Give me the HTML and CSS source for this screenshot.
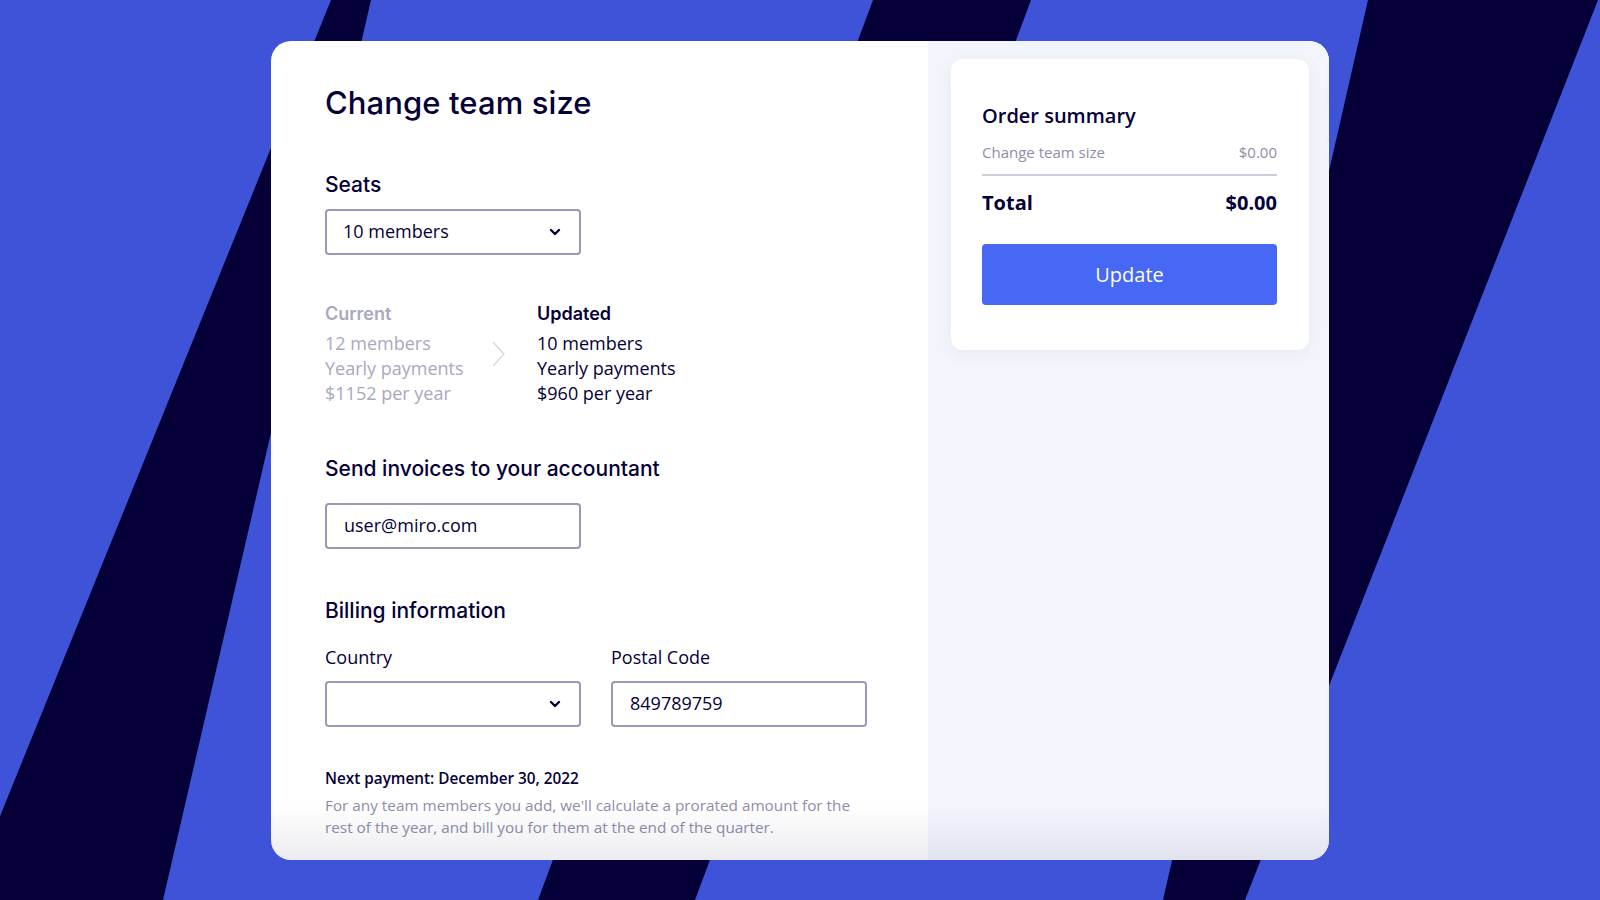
FILE: index.html
```html
<!DOCTYPE html>
<html lang="en">
<head>
<meta charset="utf-8">
<title>Change team size</title>
<link rel="stylesheet" href="styles.css">
</head>
<body>
<svg class="backdrop" viewBox="0 0 1600 900" preserveAspectRatio="none" aria-hidden="true">
  <polygon points="331,0 371,0 163,900 -34,900" />
  <polygon points="873,0 1031,0 695,900 538,900" />
  <polygon points="1368,0 1598,0 1245,900 1163,900" />
</svg>
<main class="card">
  <section class="form">
    <h1 class="title">Change team size</h1>

    <h2 class="heading heading-seats">Seats</h2>
    <div class="control select">
      <span class="control-text">10 members</span>
      <svg class="chev" viewBox="0 0 12 8" aria-hidden="true"><path d="M2 2l4 4 4-4"/></svg>
    </div>

    <div class="compare">
      <div class="col col-current">
        <div class="col-title">Current</div>
        <div class="col-lines">
          <div>12 members</div>
          <div>Yearly payments</div>
          <div>$1152 per year</div>
        </div>
      </div>
      <div class="compare-arrow">
        <svg viewBox="0 0 13 26" aria-hidden="true"><path d="M1 1l11 12L1 25"/></svg>
      </div>
      <div class="col col-updated">
        <div class="col-title">Updated</div>
        <div class="col-lines">
          <div>10 members</div>
          <div>Yearly payments</div>
          <div>$960 per year</div>
        </div>
      </div>
    </div>

    <h2 class="heading heading-invoices">Send invoices to your accountant</h2>
    <div class="control input input-email">
      <span class="control-text">user@miro.com</span>
    </div>

    <h2 class="heading heading-billing">Billing information</h2>
    <div class="billing-row">
      <div class="field">
        <label class="field-label">Country</label>
        <div class="control select">
          <span class="control-text"></span>
          <svg class="chev" viewBox="0 0 12 8" aria-hidden="true"><path d="M2 2l4 4 4-4"/></svg>
        </div>
      </div>
      <div class="field">
        <label class="field-label">Postal Code</label>
        <div class="control input">
          <span class="control-text">849789759</span>
        </div>
      </div>
    </div>

    <p class="next-payment">Next payment: December 30, 2022</p>
    <p class="note">For any team members you add, we'll calculate a prorated amount for the rest of the year, and bill you for them at the end of the quarter.</p>
  </section>

  <aside class="side">
    <div class="summary">
      <h3 class="summary-title">Order summary</h3>
      <div class="summary-row">
        <span>Change team size</span>
        <span>$0.00</span>
      </div>
      <div class="summary-total">
        <span>Total</span>
        <span>$0.00</span>
      </div>
      <button class="update-btn" type="button">Update</button>
    </div>
  </aside>
</main>
</body>
</html>
```

FILE: styles.css
```css
* {
  box-sizing: border-box;
}

html,
body {
  margin: 0;
  padding: 0;
  width: 1600px;
  height: 900px;
  overflow: hidden;
}

body {
  position: relative;
  background: #3f53d8;
  font-family: "Open Sans", "Noto Sans", sans-serif;
  color: #050038;
  display: flex;
  align-items: center;
  justify-content: center;
}

.backdrop {
  position: absolute;
  inset: 0;
  width: 1600px;
  height: 900px;
  z-index: 0;
}

.backdrop polygon {
  fill: #050038;
}

.card {
  position: relative;
  z-index: 1;
  width: 1058px;
  height: 819px;
  background: #ffffff;
  border-radius: 20px;
  overflow: hidden;
  display: grid;
  grid-template-columns: 657px 1fr;
}

.card::after {
  content: "";
  position: absolute;
  left: 0;
  right: 0;
  bottom: 0;
  height: 56px;
  background: linear-gradient(to bottom, rgba(5, 0, 56, 0), rgba(5, 0, 56, 0.075));
  pointer-events: none;
}

/* ---------- Left form ---------- */

.form {
  padding: 43px 54px 0 54px;
  display: flex;
  flex-direction: column;
  align-items: flex-start;
}

.title {
  margin: 0;
  font-family: Inter, "Open Sans", sans-serif;
  font-weight: 500;
  font-size: 31px;
  line-height: 38px;
  letter-spacing: 0.1px;
  color: #050038;
}

.heading {
  margin: 0;
  font-family: Inter, "Open Sans", sans-serif;
  font-weight: 500;
  font-size: 21px;
  line-height: 25px;
  color: #050038;
}

.heading-seats {
  margin-top: 50px;
}

.heading-invoices {
  margin-top: 50px;
}

.heading-billing {
  margin-top: 49px;
}

.control {
  width: 256px;
  height: 46px;
  border: 2px solid #9a98b4;
  border-radius: 4px;
  display: flex;
  align-items: center;
  justify-content: space-between;
  padding: 0 18px 0 16px;
  font-size: 18px;
  line-height: 25px;
  color: #050038;
  background: #fff;
}

.heading-seats + .select {
  margin-top: 12px;
}

.input-email {
  margin-top: 22px;
}

.input .control-text {
  padding-left: 1px;
}

.chev {
  width: 12px;
  height: 8px;
  flex: none;
}

.chev path {
  fill: none;
  stroke: #050038;
  stroke-width: 2.4;
  stroke-linecap: round;
  stroke-linejoin: round;
}

/* compare block */

.compare {
  margin-top: 48px;
  display: flex;
  align-items: center;
}

.col-current {
  width: 162px;
}

.compare-arrow {
  width: 50px;
  padding-left: 5px;
  display: flex;
  align-items: center;
}

.compare-arrow svg {
  width: 13px;
  height: 26px;
}

.compare-arrow path {
  fill: none;
  stroke: #d5d5df;
  stroke-width: 1.3;
}

.col-title {
  font-family: Inter, "Open Sans", sans-serif;
  font-weight: 600;
  font-size: 18px;
  line-height: 22px;
}

.col-lines {
  margin-top: 6px;
  font-size: 18px;
  line-height: 25px;
}

.col-current .col-title,
.col-current .col-lines {
  color: #a9a8bf;
}

.col-updated .col-title,
.col-updated .col-lines {
  color: #050038;
}

/* billing */

.billing-row {
  margin-top: 22px;
  display: grid;
  grid-template-columns: 256px 256px;
  column-gap: 30px;
}

.field {
  display: flex;
  flex-direction: column;
}

.field-label {
  font-size: 18px;
  line-height: 25px;
  color: #050038;
}

.field .control {
  margin-top: 11px;
}

.next-payment {
  margin: 41px 0 0;
  font-size: 15.3px;
  line-height: 20px;
  font-weight: 600;
  color: #050038;
}

.note {
  margin: 6px 0 0;
  max-width: 540px;
  font-size: 15.3px;
  line-height: 22.5px;
  color: #8f8da9;
}

/* ---------- Right side ---------- */

.side {
  background: #f3f5fd;
  padding: 18px 20px 0 23px;
}

.summary {
  background: #ffffff;
  border-radius: 12px;
  box-shadow: 0 4px 18px rgba(5, 0, 56, 0.05);
  padding: 43px 32px 45px 31px;
  display: flex;
  flex-direction: column;
}

.summary-title {
  margin: 0;
  font-size: 20px;
  line-height: 27px;
  font-weight: 600;
  color: #050038;
}

.summary-row {
  margin-top: 13px;
  padding-bottom: 12px;
  border-bottom: 2px solid #cfcfdb;
  display: flex;
  justify-content: space-between;
  font-size: 15px;
  line-height: 20px;
  color: #8f8da9;
}

.summary-total {
  margin-top: 13px;
  display: flex;
  justify-content: space-between;
  font-size: 20px;
  line-height: 27px;
  font-weight: 700;
  color: #050038;
}

.update-btn {
  margin-top: 28px;
  height: 61px;
  width: 100%;
  border: none;
  border-radius: 4px;
  background: #4767f5;
  color: #ffffff;
  font-family: "Open Sans", "Noto Sans", sans-serif;
  font-size: 20px;
  line-height: 27px;
  font-weight: 400;
  padding: 0;
  cursor: pointer;
}
```
